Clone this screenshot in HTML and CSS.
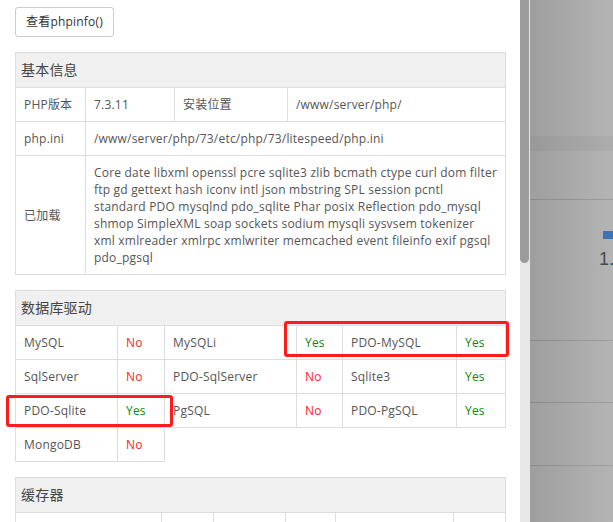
FILE: index.html
```html
<!DOCTYPE html>
<html>

<head>
    <meta charset="utf-8">
    <link rel="stylesheet" href="styles.css">
</head>

<body>
    <div class="screen">

        <div class="popup">
            <div class="popup-body">
                <button class="btn">查看phpinfo()</button>

                <table class="info">
                    <colgroup>
                        <col style="width: 70px">
                        <col style="width: 89px">
                        <col style="width: 113px">
                        <col style="width: 218px">
                    </colgroup>
                    <thead>
                        <tr>
                            <th colspan="4">基本信息</th>
                        </tr>
                    </thead>
                    <tbody>
                        <tr>
                            <td>PHP版本</td>
                            <td>7.3.11</td>
                            <td>安装位置</td>
                            <td>/www/server/php/</td>
                        </tr>
                        <tr>
                            <td>php.ini</td>
                            <td colspan="3">/www/server/php/73/etc/php/73/litespeed/php.ini</td>
                        </tr>
                        <tr>
                            <td>已加载</td>
                            <td colspan="3" class="modules">Core date libxml openssl pcre sqlite3 zlib bcmath ctype curl dom filter<br>ftp gd gettext hash iconv intl json mbstring SPL session pcntl<br>standard PDO mysqlnd pdo_sqlite Phar posix Reflection pdo_mysql<br>shmop SimpleXML soap sockets sodium mysqli sysvsem tokenizer<br>xml xmlreader xmlrpc xmlwriter memcached event fileinfo exif pgsql<br>pdo_pgsql</td>
                        </tr>
                    </tbody>
                </table>

                <table class="info">
                    <colgroup>
                        <col style="width: 102px">
                        <col style="width: 47px">
                        <col style="width: 132px">
                        <col style="width: 46px">
                        <col style="width: 114px">
                        <col style="width: 49px">
                    </colgroup>
                    <thead>
                        <tr>
                            <th colspan="6">数据库驱动</th>
                        </tr>
                    </thead>
                    <tbody>
                        <tr>
                            <td>MySQL</td>
                            <td class="no">No</td>
                            <td>MySQLi</td>
                            <td class="yes">Yes</td>
                            <td>PDO-MySQL</td>
                            <td class="yes">Yes</td>
                        </tr>
                        <tr>
                            <td>SqlServer</td>
                            <td class="no">No</td>
                            <td>PDO-SqlServer</td>
                            <td class="no">No</td>
                            <td>Sqlite3</td>
                            <td class="yes">Yes</td>
                        </tr>
                        <tr>
                            <td>PDO-Sqlite</td>
                            <td class="yes">Yes</td>
                            <td>PgSQL</td>
                            <td class="no">No</td>
                            <td>PDO-PgSQL</td>
                            <td class="yes">Yes</td>
                        </tr>
                        <tr>
                            <td>MongoDB</td>
                            <td class="no">No</td>
                        </tr>
                    </tbody>
                </table>

                <table class="info">
                    <colgroup>
                        <col style="width: 146px">
                        <col style="width: 52px">
                        <col style="width: 72px">
                        <col style="width: 50px">
                        <col style="width: 118px">
                        <col style="width: 52px">
                    </colgroup>
                    <thead>
                        <tr>
                            <th colspan="6">缓存器</th>
                        </tr>
                    </thead>
                    <tbody>
                        <tr>
                            <td>&nbsp;</td>
                            <td>&nbsp;</td>
                            <td>&nbsp;</td>
                            <td>&nbsp;</td>
                            <td>&nbsp;</td>
                            <td>&nbsp;</td>
                        </tr>
                    </tbody>
                </table>

                <!-- annotation boxes drawn over the screenshot -->
                <div class="mark mark-mysql"></div>
                <div class="mark mark-sqlite"></div>
            </div>

            <div class="scrollbar">
                <div class="scrollbar-thumb"></div>
            </div>
        </div>

        <div class="backdrop">
            <div class="bd-top"></div>
            <div class="bd-band"></div>
            <div class="bd-gap"></div>
            <div class="bd-stat">
                <div class="bd-bar"></div>
                <div class="bd-num">1.5</div>
            </div>
            <div class="bd-row"></div>
            <div class="bd-row bd-row-b"></div>
        </div>

    </div>
</body>

</html>
```

FILE: styles.css
```css
* {
    box-sizing: border-box;
}

html,
body {
    margin: 0;
    padding: 0;
    height: 100%;
}

body {
    font-family: "Open Sans", "Noto Sans CJK SC", sans-serif;
    font-size: 12px;
    letter-spacing: 0.2px;
    color: #555;
    overflow: hidden;
}

.screen {
    display: flex;
    height: 522px;
}

/* popup layer */
.popup {
    width: 530px;
    display: flex;
    background-color: #fff;
}

.popup-body {
    position: relative;
    width: 520px;
    padding: 7px 15px 0 15px;
    display: flex;
    flex-direction: column;
    align-items: flex-start;
    overflow: hidden;
}

.btn {
    height: 30px;
    padding: 5px 10px;
    margin-bottom: 15px;
    font-family: inherit;
    font-size: 12px;
    letter-spacing: 0.2px;
    line-height: 18px;
    color: #333;
    background-color: #fff;
    border: 1px solid #ccc;
    border-radius: 3px;
}

table.info {
    width: 490px;
    flex: none;
    table-layout: fixed;
    border-collapse: collapse;
    margin-bottom: 15px;
}

table.info th,
table.info td {
    border: 1px solid #ddd;
    text-align: left;
    vertical-align: middle;
}

table.info th {
    padding: 7px 5px;
    font-size: 14px;
    line-height: 20px;
    font-weight: normal;
    color: #444;
    background-color: #f0f0f0;
}

table.info td {
    padding: 8px;
    line-height: 17px;
}

td.modules {
    white-space: nowrap;
}

td.yes {
    color: #0a8a0a;
}

td.no {
    color: #ff2222;
}

.mark {
    position: absolute;
    border: 3px solid #ff1c1c;
    border-radius: 3px;
}

.mark-mysql {
    left: 284px;
    top: 321px;
    width: 225px;
    height: 36px;
}

.mark-sqlite {
    left: 6px;
    top: 395px;
    width: 167px;
    height: 32px;
}

.scrollbar {
    width: 10px;
    background-color: #e8e8e8;
}

.scrollbar-thumb {
    width: 9px;
    height: 263px;
    background-color: #9b9b9b;
    border-radius: 0 0 5px 5px;
}

/* dimmed page behind the popup */
.backdrop {
    flex: 1;
    overflow: hidden;
    background: linear-gradient(to right, #9e9e9e, #b4b4b4);
}

.bd-top {
    height: 136px;
}

.bd-band {
    height: 15px;
    background-color: rgba(0, 0, 0, 0.035);
}

.bd-gap {
    height: 49px;
    border-bottom: 1px solid rgba(0, 0, 0, 0.12);
}

.bd-stat {
    height: 141px;
    padding: 31px 0 0 73px;
    border-bottom: 1px solid rgba(0, 0, 0, 0.12);
}

.bd-bar {
    width: 20px;
    height: 8px;
    background-color: #3b73b5;
}

.bd-num {
    margin: 9px 0 0 -4px;
    font-family: "Liberation Sans", sans-serif;
    font-size: 18px;
    line-height: 22px;
    color: #474747;
}

.bd-row {
    height: 62px;
    border-bottom: 1px solid rgba(0, 0, 0, 0.12);
}

.bd-row-b {
    height: 63px;
}
```
